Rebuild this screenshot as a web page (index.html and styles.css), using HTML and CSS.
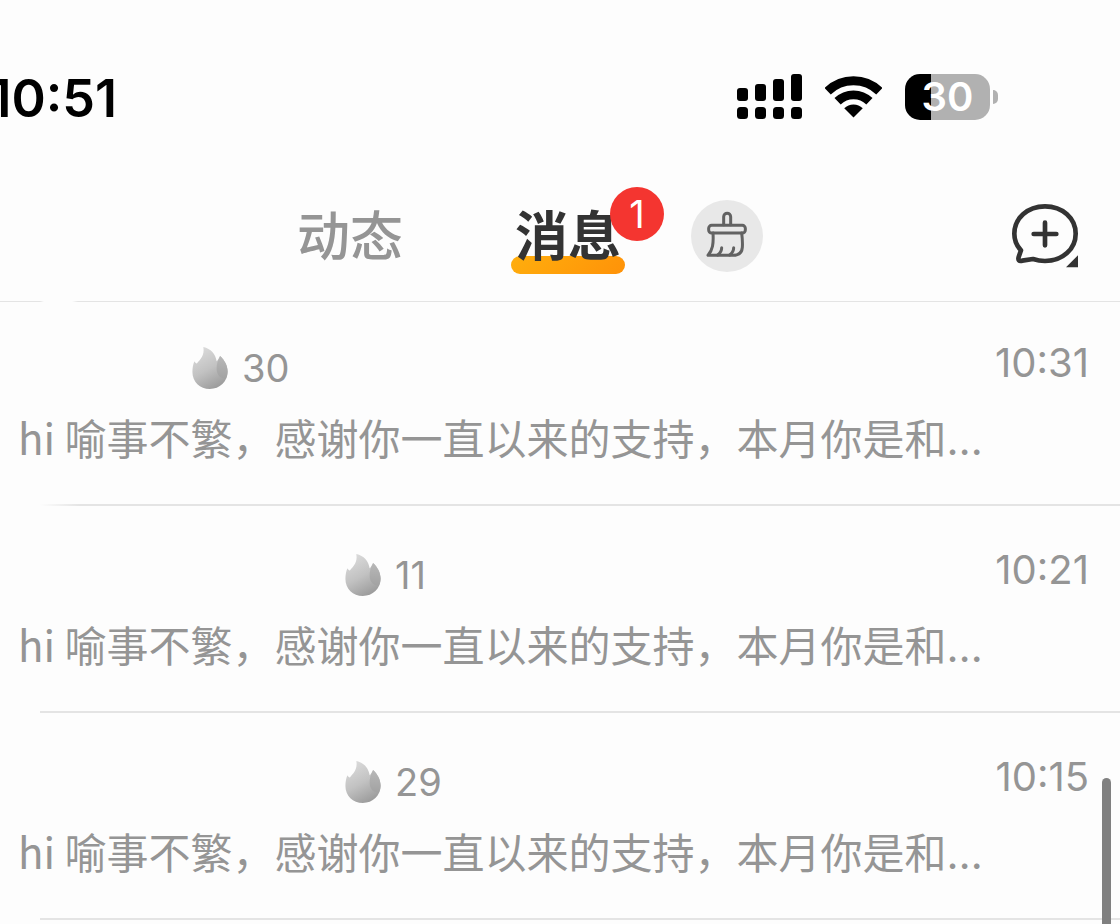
FILE: index.html
```
<!DOCTYPE html>
<html lang="zh-CN">
<head>
  <meta charset="UTF-8">
  <meta name="viewport" content="width=device-width, initial-scale=1.0">
  <title>消息</title>
  <link rel="stylesheet" href="styles.css">
</head>
<body>
  <!-- shared flame icon -->
  <svg class="defs" width="0" height="0" aria-hidden="true">
    <defs>
      <linearGradient id="flame-main" x1="0.2" y1="0.1" x2="0.6" y2="1">
        <stop offset="0" stop-color="#d8d8d8"/>
        <stop offset="0.5" stop-color="#c2c2c2"/>
        <stop offset="1" stop-color="#9c9c9c"/>
      </linearGradient>
      <linearGradient id="flame-side" x1="0" y1="0" x2="0" y2="1">
        <stop offset="0" stop-color="#b8b8b8"/>
        <stop offset="1" stop-color="#a2a2a2"/>
      </linearGradient>
    </defs>
    <symbol id="flame" viewBox="0 0 103 123">
      <path fill="url(#flame-main)" d="M32 0C54 5 68 20 71 42C75 38 78 33 81 26C94 38 103 54 103 72C103 102 80 123 51 123C22 123 0 102 0 73C0 61 2 51 6 42C8 46 10 48 13 48C24 36 36 24 32 0Z"/>
      <path fill="url(#flame-side)" d="M81 26C94 38 103 54 103 72C103 80 101 87 98 93C82 93 72 82 71 66C70 50 75 38 81 26Z"/>
    </symbol>
  </svg>

  <div class="status-bar">
    <div class="clock">10:51</div>
    <div class="status-icons">
      <svg class="signal" viewBox="0 0 66 46" aria-hidden="true">
        <rect x="0" y="14" width="11" height="13" rx="3"/>
        <rect x="18" y="10" width="11" height="17" rx="3"/>
        <rect x="36" y="5" width="11" height="22" rx="3"/>
        <rect x="54" y="0" width="11" height="27" rx="3"/>
        <rect x="0" y="33" width="11" height="12" rx="3.5"/>
        <rect x="18" y="33" width="11" height="12" rx="3.5"/>
        <rect x="36" y="33" width="11" height="12" rx="3.5"/>
        <rect x="54" y="33" width="11" height="12" rx="3.5"/>
      </svg>
      <svg class="wifi" viewBox="0 0 172 126" aria-hidden="true">
        <g fill="none" stroke="#000" stroke-width="27">
          <path d="M8 45.500A112 112 0 0 1 164 45.500"/>
          <path d="M38 76A69 69 0 0 1 134 76"/>
        </g>
        <path d="M58 97A40 40 0 0 1 114 97L86 125Z"/>
      </svg>
      <div class="battery">
        <div class="battery-body">30</div>
        <div class="battery-cap"></div>
      </div>
    </div>
  </div>

  <header class="header">
    <nav class="tabs">
      <a class="tab" href="#feed">动态</a>
      <a class="tab active" href="#messages">消息<span class="badge">1</span></a>
    </nav>
    <button class="clean-btn" type="button" aria-label="清理">
      <svg viewBox="0 0 216 216" fill="none" stroke="#626262" stroke-width="9" stroke-linejoin="round" stroke-linecap="round" aria-hidden="true">
        <path d="M98 74V50C98 36 119 36 119 50V74"/>
        <rect x="53" y="76" width="110" height="23" rx="9"/>
        <path d="M66 99C68 132 65 150 51 166H126C144 166 153 156 154 142C155 128 154 114 152 99"/>
        <path d="M80 165C88 159 92 151 92 143M116 165C124 159 128 151 128 143"/>
      </svg>
    </button>
    <button class="new-btn" type="button" aria-label="新建">
      <svg viewBox="0 0 198 192" fill="none" stroke="#333" stroke-width="14" stroke-linejoin="round" stroke-linecap="round" aria-hidden="true">
        <path d="M63 165C75 169 87 171 99 171C152 171 191 135 191 89C191 43 152 7 99 7C46 7 7 43 7 89C7 109 14 125 27 139L20 159Q16 174 31 170Z"/>
        <path d="M65 90H133M99 56V124"/>
        <path fill="#333" stroke="none" d="M162 190H198V154Z"/>
      </svg>
    </button>
  </header>

  <main class="list">
    <article class="chat">
      <div class="chat-top">
        <span class="name short"></span>
        <svg class="flame" aria-hidden="true"><use href="#flame"/></svg>
        <span class="streak">30</span>
        <time class="time">10:31</time>
      </div>
      <p class="preview">hi 喻事不繁，感谢你一直以来的支持，本月你是和<span class="dots">…</span></p>
    </article>
    <article class="chat">
      <div class="chat-top">
        <span class="name"></span>
        <svg class="flame" aria-hidden="true"><use href="#flame"/></svg>
        <span class="streak">11</span>
        <time class="time">10:21</time>
      </div>
      <p class="preview">hi 喻事不繁，感谢你一直以来的支持，本月你是和<span class="dots">…</span></p>
    </article>
    <article class="chat">
      <div class="chat-top">
        <span class="name"></span>
        <svg class="flame" aria-hidden="true"><use href="#flame"/></svg>
        <span class="streak">29</span>
        <time class="time">10:15</time>
      </div>
      <p class="preview">hi 喻事不繁，感谢你一直以来的支持，本月你是和<span class="dots">…</span></p>
    </article>
  </main>

  <div class="scrollbar"></div>
</body>
</html>
```
FILE: styles.css
```
* {
  margin: 0;
  padding: 0;
  box-sizing: border-box;
}

body {
  font-family: Inter, "Noto Sans CJK SC", sans-serif;
  background: #fdfdfd;
  color: #333;
  overflow-x: hidden;
}

svg {
  display: block;
}

.defs {
  position: absolute;
}

button {
  border: none;
  background: none;
  cursor: pointer;
}

/* status bar */
.status-bar {
  display: flex;
  justify-content: space-between;
  align-items: flex-start;
  padding: 74px 122px 0 0;
  height: 120px;
}

.clock {
  display: flex;
  justify-content: flex-end;
  width: 117px;
  font-size: 52px;
  font-weight: 600;
  line-height: 50px;
  color: #000;
}

.status-icons {
  display: flex;
  align-items: center;
}

.signal {
  width: 66px;
  height: 46px;
  margin-right: 22px;
}

.wifi {
  width: 57px;
  height: 42px;
  margin-right: 23px;
}

.battery {
  display: flex;
  align-items: center;
  gap: 3px;
}

.battery-body {
  width: 85px;
  height: 46px;
  border-radius: 15px;
  background: linear-gradient(to right, #000 26px, #b1b1b1 26px);
  color: #fff;
  font-size: 40px;
  font-weight: 600;
  line-height: 46px;
  text-align: center;
}

.battery-cap {
  width: 5px;
  height: 14px;
  border-radius: 0 6px 6px 0;
  background: #b1b1b1;
}

/* header */
.header {
  display: flex;
  align-items: center;
  height: 182px;
  padding: 50px 42px 0 293px;
  background: linear-gradient(to right, #e4e4e4 40px, #fdfdfd 44px, #fdfdfd 72px, #e4e4e4 78px) bottom / 100% 1px no-repeat;
}

.tabs {
  display: flex;
  gap: 104px;
}

.tab {
  position: relative;
  height: 76px;
  padding: 0 4px;
  font-size: 53px;
  font-weight: 500;
  line-height: 78px;
  color: #959595;
  text-decoration: none;
}

.tab.active {
  font-weight: 700;
  color: #333;
}

.tab.active::before {
  content: "";
  position: absolute;
  left: 0;
  right: 0;
  bottom: 0;
  height: 18px;
  border-radius: 9px;
  background: linear-gradient(135deg, #ffae0d, #ff9208);
  z-index: -1;
}

.badge {
  position: absolute;
  top: -11px;
  right: -39px;
  width: 54px;
  height: 54px;
  border-radius: 50%;
  background: #f43530;
  color: #fff;
  font-size: 38px;
  font-weight: 400;
  line-height: 54px;
  text-align: center;
}

.clean-btn {
  width: 72px;
  height: 72px;
  margin-left: 66px;
  border-radius: 50%;
  background: #e8e8e8;
}

.new-btn {
  width: 66px;
  height: 64px;
  margin-left: auto;
}

/* chat list */
.chat {
  height: 207px;
  padding: 42px 31px 0 18px;
  background: linear-gradient(#e4e4e4, #e4e4e4) 40px 100% / 100% 2px no-repeat;
}

.chat:first-child {
  height: 204px;
  padding-top: 39px;
  background-image: linear-gradient(to right, #fdfdfd, #e4e4e4 40px);
}

.chat-top {
  display: flex;
  align-items: center;
  height: 54px;
  color: #959595;
  font-size: 38px;
  line-height: 54px;
}

.name {
  width: 327px;
}

.name.short {
  width: 174px;
}

.flame {
  width: 36px;
  height: 42px;
}

.streak {
  margin-left: 14px;
}

.time {
  align-self: flex-start;
  margin-left: auto;
  font-size: 40px;
  line-height: 44px;
}

.preview {
  margin-top: 12px;
  font-family: "Noto Sans CJK SC", sans-serif;
  font-size: 42px;
  line-height: 60px;
  color: #959595;
  white-space: nowrap;
}

.dots {
  font-family: Inter, sans-serif;
}

.scrollbar {
  position: fixed;
  top: 778px;
  right: 9px;
  bottom: 0;
  width: 9px;
  border-radius: 5px 5px 0 0;
  background: #808080;
}
```
